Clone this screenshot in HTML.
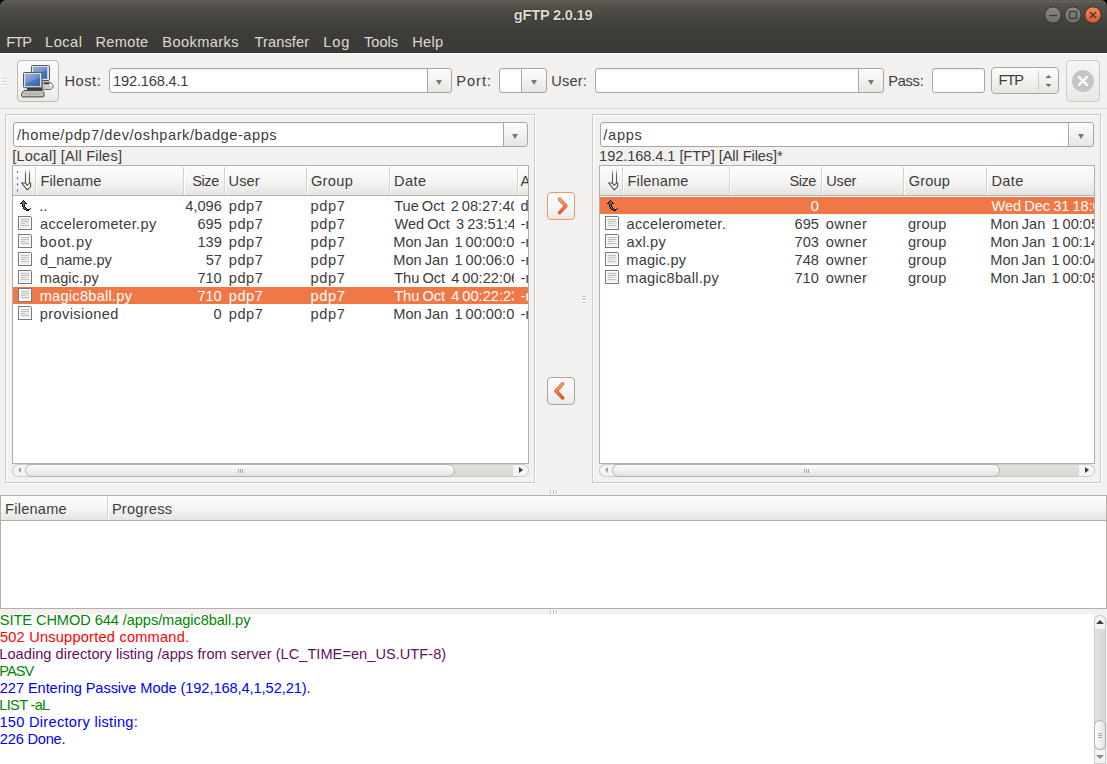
<!DOCTYPE html><html><head><meta charset="utf-8"><style>
*{margin:0;padding:0;box-sizing:border-box}
html,body{width:1107px;height:764px;overflow:hidden}
body{position:relative;background:#f2f1f0;font-family:"Liberation Sans",sans-serif;font-size:14.6px;color:#3c3c3c}
.a{position:absolute}
.t{position:absolute;white-space:pre;line-height:17px}
svg{position:absolute;overflow:visible}
.px{shape-rendering:crispEdges}
.entry{position:absolute;background:#fff;border:1px solid #aaa69f;border-radius:3px;box-shadow:inset 0 1px 1px rgba(0,0,0,.06)}
.cbtn{position:absolute;border:1px solid #aaa69f;border-radius:0 3px 3px 0;background:linear-gradient(#fcfcfc,#f3f2f1 50%,#e7e5e2)}
.arr{position:absolute;width:0;height:0;border-left:3.5px solid transparent;border-right:3.5px solid transparent;border-top:5px solid #787672;margin-left:1px;margin-top:1.5px}
.frame{position:absolute;border:1px solid #cfccc7;box-shadow:inset 1px 1px 0 #fff,1px 1px 0 #fff}
.list{position:absolute;background:#fff;border:1px solid #b3b0aa;overflow:hidden}
.hdr{position:absolute;left:0;top:0;background:linear-gradient(#fdfdfd,#f6f5f4 50%,#e6e4e1);border-bottom:1px solid #b3b0aa}
.sep{position:absolute;width:1px;background:#d6d3ce;box-shadow:1px 0 0 #fff}
.sel{position:absolute;background:#f07746}
</style></head><body>
<div class="a" style="left:0;top:0;width:1107px;height:53px;background:#000"></div>
<div class="a" style="left:0;top:0;width:1107px;height:53px;border-radius:6px 6px 0 0;background:linear-gradient(#5d5b53 0px,#57554e 3px,#46453f 18px,#3d3c38 30px,#3c3b37 52px)"></div>
<div class="a" style="left:5px;top:1px;width:1097px;height:1px;background:#6b6961;opacity:.8"></div>
<div class="a" style="left:0;top:52px;width:1107px;height:1px;background:#2f2e2a"></div>
<div class="a" style="left:0;top:53px;width:1107px;height:1px;background:#fff"></div>
<div class="t" style="left:513.80px;top:7.10px;color:#dfdbd2;letter-spacing:-0.210px;font-weight:bold;text-shadow:0 0 1.5px rgba(0,0,0,.8);">gFTP 2.0.19</div>
<svg style="left:0;top:0" width="1107" height="30"><defs><linearGradient id="gb" x1="0" y1="0" x2="0" y2="1"><stop offset="0" stop-color="#8a8880"/><stop offset="1" stop-color="#6f6d66"/></linearGradient><linearGradient id="go" x1="0" y1="0" x2="0" y2="1"><stop offset="0" stop-color="#f58a5c"/><stop offset="1" stop-color="#e0542a"/></linearGradient></defs><circle cx="1052.9" cy="15" r="8.2" fill="url(#gb)" stroke="#33322e" stroke-width="1"/><circle cx="1073" cy="15" r="8.2" fill="url(#gb)" stroke="#33322e" stroke-width="1"/><circle cx="1093" cy="15" r="8.2" fill="url(#go)" stroke="#33322e" stroke-width="1"/><line x1="1049" y1="15.5" x2="1057" y2="15.5" stroke="#3c3b37" stroke-width="1.3"/><rect x="1069.5" y="11.5" width="7" height="7" fill="none" stroke="#3c3b37" stroke-width="1.3"/><path d="M1090 12 L1096 18 M1096 12 L1090 18" stroke="#3c3b37" stroke-width="1.4"/></svg>
<div class="t" style="left:6.30px;top:33.50px;color:#dfdbd2;letter-spacing:-1.000px;">FTP</div>
<div class="t" style="left:45.10px;top:33.50px;color:#dfdbd2;letter-spacing:0.475px;">Local</div>
<div class="t" style="left:95.50px;top:33.50px;color:#dfdbd2;letter-spacing:0.320px;">Remote</div>
<div class="t" style="left:162.30px;top:33.50px;color:#dfdbd2;letter-spacing:0.413px;">Bookmarks</div>
<div class="t" style="left:254.60px;top:33.50px;color:#dfdbd2;letter-spacing:0.086px;">Transfer</div>
<div class="t" style="left:323.30px;top:33.50px;color:#dfdbd2;letter-spacing:0.900px;">Log</div>
<div class="t" style="left:364.00px;top:33.50px;color:#dfdbd2;letter-spacing:-0.000px;">Tools</div>
<div class="t" style="left:412.20px;top:33.50px;color:#dfdbd2;letter-spacing:0.267px;">Help</div>
<div class="a" style="left:0;top:108px;width:1107px;height:1px;background:#dedbd7"></div>
<div class="a" style="left:3px;top:78px;width:4px;height:1px;background:#cfccc7;box-shadow:0 1px 0 #fff"></div>
<div class="a" style="left:3px;top:81px;width:4px;height:1px;background:#cfccc7;box-shadow:0 1px 0 #fff"></div>
<div class="a" style="left:3px;top:84px;width:4px;height:1px;background:#cfccc7;box-shadow:0 1px 0 #fff"></div>
<div class="a" style="left:17px;top:60px;width:42px;height:42px;border:1px solid #bdb9b3;border-radius:4px;background:linear-gradient(#fbfbfb,#f4f3f2 60%,#ebe9e6)"></div>
<svg style="left:0;top:0" width="60" height="100">
<defs><linearGradient id="scr" x1="0" y1="0" x2="1" y2="1"><stop offset="0" stop-color="#86a3d6"/><stop offset=".5" stop-color="#4f78c0"/><stop offset="1" stop-color="#3563b2"/></linearGradient></defs>
<rect x="31.5" y="65.5" width="18" height="15" rx="1" fill="#e2e2dd" stroke="#5a5a5a" stroke-width="1"/>
<rect x="33" y="67" width="14.2" height="11.8" fill="url(#scr)"/>
<path d="M33 67 h14.2 v3 l-14.2 6z" fill="#fff" opacity=".18"/>
<path d="M42.5 82 h7.5 l3 3 v2.5 l-2 2 h-8.5z" fill="#cfcfca" stroke="#555" stroke-width="0.8"/>
<rect x="44" y="82.8" width="6.5" height="1.3" fill="#1e1e1e"/>
<path d="M49.5 82.5 l3 2.5 l-1 2 l-2.5 -1.5z" fill="#f4f4f2"/>
<rect x="23.5" y="72.5" width="18.4" height="15.2" rx="1" fill="#dededa" stroke="#555" stroke-width="1"/>
<rect x="25.2" y="74" width="14.8" height="12.1" fill="url(#scr)"/>
<path d="M25.2 74 h14.8 v3.5 l-14.8 6.5z" fill="#fff" opacity=".18"/>
<rect x="27" y="88" width="15" height="2.2" fill="#3a3a3a"/>
<path d="M24 90.6 h18.5 l1.4 2.2 v3.4 l-1 0.7 h-20.5 l-0.8 -1 v-2.2z" fill="#c9c9c4" stroke="#333" stroke-width="0.9"/>
<rect x="24.5" y="92.5" width="17" height="2.6" fill="#b7b7b2"/>
</svg>
<div class="t" style="left:64.40px;top:72.70px;letter-spacing:0.575px;">Host:</div>
<div class="entry" style="left:109px;top:68px;width:319px;height:25px;border-radius:3px 0 0 3px"></div>
<div class="cbtn" style="left:427px;top:68px;width:25px;height:25px"></div>
<div class="arr" style="left:435px;top:78px"></div>
<div class="t" style="left:113.10px;top:72.70px;letter-spacing:-0.170px;">192.168.4.1</div>
<div class="t" style="left:456.20px;top:72.70px;letter-spacing:1.000px;">Port:</div>
<div class="entry" style="left:499px;top:68px;width:23px;height:25px;border-radius:3px 0 0 3px"></div>
<div class="cbtn" style="left:521px;top:68px;width:26px;height:25px"></div>
<div class="arr" style="left:530px;top:78px"></div>
<div class="t" style="left:551.30px;top:72.70px;letter-spacing:0.150px;">User:</div>
<div class="entry" style="left:595px;top:68px;width:264px;height:25px;border-radius:3px 0 0 3px"></div>
<div class="cbtn" style="left:858px;top:68px;width:26px;height:25px"></div>
<div class="arr" style="left:867px;top:78px"></div>
<div class="t" style="left:888.20px;top:72.70px;letter-spacing:-0.250px;">Pass:</div>
<div class="entry" style="left:932px;top:68px;width:53px;height:25px"></div>
<div class="a" style="left:991px;top:67px;width:68px;height:27px;border:1px solid #aaa69f;border-radius:4px;background:linear-gradient(#fcfcfc,#f3f2f1 50%,#e7e5e2)"></div>
<div class="a" style="left:1038px;top:71px;width:1px;height:19px;background:#cfccc7"></div>
<svg style="left:1044px;top:74px" width="10" height="14"><path d="M1.5 4 L4.5 1 L7.5 4z" fill="#6c6a66"/><path d="M1.5 10 L4.5 13 L7.5 10z" fill="#6c6a66"/></svg>
<div class="t" style="left:998.50px;top:72.40px;letter-spacing:-1.000px;">FTP</div>
<div class="a" style="left:1066px;top:60px;width:34px;height:42px;border:1px solid #cfccc7;border-radius:4px;background:linear-gradient(#f6f5f4,#f0efee 60%,#e9e7e4)"></div>
<svg style="left:1071px;top:69px" width="24" height="24"><circle cx="12" cy="12" r="11" fill="#c7c4c1"/><path d="M8 8 L16 16 M16 8 L8 16" stroke="#fff" stroke-width="2.4" stroke-linecap="round"/></svg>
<div class="frame" style="left:5px;top:114px;width:530px;height:369px"></div>
<div class="entry" style="left:13px;top:122px;width:491px;height:25px;border-radius:3px 0 0 3px"></div>
<div class="cbtn" style="left:503px;top:122px;width:25px;height:25px"></div>
<div class="arr" style="left:511px;top:132px"></div>
<div class="t" style="left:17.00px;top:127.00px;letter-spacing:0.559px;">/home/pdp7/dev/oshpark/badge-apps</div>
<div class="t" style="left:12.25px;top:148.20px;letter-spacing:0.192px;">[Local] [All Files]</div>
<div class="list" style="left:12px;top:165px;width:517px;height:299px">
<div class="hdr" style="width:515px;height:30px"></div>
<div class="sep" style="left:22px;top:1px;height:28px"></div>
<div class="sep" style="left:170px;top:1px;height:28px"></div>
<div class="sep" style="left:211px;top:1px;height:28px"></div>
<div class="sep" style="left:293px;top:1px;height:28px"></div>
<div class="sep" style="left:376px;top:1px;height:28px"></div>
<div class="sep" style="left:504px;top:1px;height:28px"></div>
</div>
<svg style="left:0;top:0" width="1107" height="200"><defs><linearGradient id="sg" x1="0" y1="0" x2="0" y2="1"><stop offset="0" stop-color="#999" stop-opacity=".3"/><stop offset=".35" stop-color="#666"/><stop offset="1" stop-color="#555"/></linearGradient></defs><path d="M17.5 171 V192" stroke="#3f6fc4" stroke-width="1.1" stroke-dasharray="2 4.2"/><path d="M25.5 169.5 V183 M29.5 169.5 V183" stroke="url(#sg)" stroke-width="1.1"/><path d="M21.6 183 L27.3 189.8 L30.6 186.6 L30.6 183 L29.5 183 L27.3 185.5 L25.5 183 Z" fill="#fbfbfb" stroke="#4a4a4a" stroke-width="1.1" stroke-linejoin="round"/></svg>
<div class="a" style="left:12px;top:464px;width:517px;height:13px;border:1px solid #cfccc7;border-radius:7px;background:linear-gradient(#e3e1de,#d9d7d3)"></div>
<div class="a" style="left:12px;top:464px;width:16px;height:13px;border:1px solid #cfccc7;border-radius:7px 0 0 7px;border-right:none;background:#f5f4f3"></div>
<div class="a" style="left:513px;top:464px;width:16px;height:13px;border:1px solid #cfccc7;border-radius:0 7px 7px 0;border-left:none;background:#f5f4f3"></div>
<div class="a" style="left:17.5px;top:467.3px;width:0;height:0;border-top:3.5px solid transparent;border-bottom:3.5px solid transparent;border-right:3.5px solid #a3a09b"></div>
<div class="a" style="left:519px;top:467px;width:0;height:0;border-top:3.5px solid transparent;border-bottom:3.5px solid transparent;border-left:4px solid #3c3c3c"></div>
<div class="a" style="left:25px;top:464px;width:430px;height:13px;border:1px solid #b5b2ac;border-radius:7px;background:linear-gradient(#fbfbfa,#f1f0ef 55%,#e3e1de)"></div>
<div class="a" style="left:238px;top:469px;width:1px;height:4px;background:#aaa7a2"></div>
<div class="a" style="left:240px;top:469px;width:1px;height:4px;background:#aaa7a2"></div>
<div class="a" style="left:242px;top:469px;width:1px;height:4px;background:#aaa7a2"></div>
<div class="frame" style="left:592px;top:114px;width:509px;height:369px"></div>
<div class="entry" style="left:600px;top:122px;width:470px;height:25px;border-radius:3px 0 0 3px"></div>
<div class="cbtn" style="left:1068px;top:122px;width:26px;height:25px"></div>
<div class="arr" style="left:1077px;top:132px"></div>
<div class="t" style="left:603.30px;top:127.00px;letter-spacing:0.725px;">/apps</div>
<div class="t" style="left:599.10px;top:148.20px;letter-spacing:-0.072px;">192.168.4.1 [FTP] [All Files]*</div>
<div class="list" style="left:599px;top:165px;width:496px;height:299px">
<div class="hdr" style="width:494px;height:30px"></div>
<div class="sep" style="left:22px;top:1px;height:28px"></div>
<div class="sep" style="left:129px;top:1px;height:28px"></div>
<div class="sep" style="left:221px;top:1px;height:28px"></div>
<div class="sep" style="left:303px;top:1px;height:28px"></div>
<div class="sep" style="left:386px;top:1px;height:28px"></div>
</div>
<svg style="left:0;top:0" width="1107" height="200"><defs><linearGradient id="sg" x1="0" y1="0" x2="0" y2="1"><stop offset="0" stop-color="#999" stop-opacity=".3"/><stop offset=".35" stop-color="#666"/><stop offset="1" stop-color="#555"/></linearGradient></defs><path d="M612.5 169.5 V183 M616.5 169.5 V183" stroke="url(#sg)" stroke-width="1.1"/><path d="M608.6 183 L614.3 189.8 L617.6 186.6 L617.6 183 L616.5 183 L614.3 185.5 L612.5 183 Z" fill="#fbfbfb" stroke="#4a4a4a" stroke-width="1.1" stroke-linejoin="round"/></svg>
<div class="a" style="left:599px;top:464px;width:496px;height:13px;border:1px solid #cfccc7;border-radius:7px;background:linear-gradient(#e3e1de,#d9d7d3)"></div>
<div class="a" style="left:599px;top:464px;width:16px;height:13px;border:1px solid #cfccc7;border-radius:7px 0 0 7px;border-right:none;background:#f5f4f3"></div>
<div class="a" style="left:1079px;top:464px;width:16px;height:13px;border:1px solid #cfccc7;border-radius:0 7px 7px 0;border-left:none;background:#f5f4f3"></div>
<div class="a" style="left:604.5px;top:467.3px;width:0;height:0;border-top:3.5px solid transparent;border-bottom:3.5px solid transparent;border-right:3.5px solid #a3a09b"></div>
<div class="a" style="left:1085px;top:467px;width:0;height:0;border-top:3.5px solid transparent;border-bottom:3.5px solid transparent;border-left:4px solid #3c3c3c"></div>
<div class="a" style="left:612px;top:464px;width:388px;height:13px;border:1px solid #b5b2ac;border-radius:7px;background:linear-gradient(#fbfbfa,#f1f0ef 55%,#e3e1de)"></div>
<div class="a" style="left:804px;top:469px;width:1px;height:4px;background:#aaa7a2"></div>
<div class="a" style="left:806px;top:469px;width:1px;height:4px;background:#aaa7a2"></div>
<div class="a" style="left:808px;top:469px;width:1px;height:4px;background:#aaa7a2"></div>
<div class="t" style="left:40.40px;top:173.30px;letter-spacing:0.129px;">Filename</div>
<div class="t" style="left:192.20px;top:173.30px;letter-spacing:-0.400px;">Size</div>
<div class="t" style="left:228.50px;top:173.30px;letter-spacing:0.100px;">User</div>
<div class="t" style="left:310.90px;top:173.30px;letter-spacing:0.375px;">Group</div>
<div class="t" style="left:394.00px;top:173.30px;letter-spacing:0.467px;">Date</div>
<div class="t" style="left:520.40px;top:173.30px;width:7.60px;overflow:hidden;">A</div>
<div class="t" style="left:627.60px;top:173.30px;letter-spacing:0.114px;">Filename</div>
<div class="t" style="left:789.40px;top:173.30px;letter-spacing:-0.467px;">Size</div>
<div class="t" style="left:826.30px;top:173.30px;letter-spacing:-0.233px;">User</div>
<div class="t" style="left:908.80px;top:173.30px;letter-spacing:0.150px;">Group</div>
<div class="t" style="left:991.40px;top:173.30px;letter-spacing:0.367px;">Date</div>
<svg class="px" style="left:18px;top:198px" width="14" height="14"><rect x="5" y="2" width="1" height="1" fill="#0a0a0a"/><rect x="4" y="3" width="1" height="1" fill="#0a0a0a"/><rect x="5" y="3" width="1" height="1" fill="#5b7a4a"/><rect x="6" y="3" width="1" height="1" fill="#0a0a0a"/><rect x="3" y="4" width="1" height="1" fill="#0a0a0a"/><rect x="4" y="4" width="1" height="1" fill="#5b7a4a"/><rect x="5" y="4" width="1" height="1" fill="#5b7a4a"/><rect x="6" y="4" width="1" height="1" fill="#5b7a4a"/><rect x="7" y="4" width="1" height="1" fill="#0a0a0a"/><rect x="2" y="5" width="1" height="1" fill="#0a0a0a"/><rect x="3" y="5" width="1" height="1" fill="#0a0a0a"/><rect x="4" y="5" width="1" height="1" fill="#5b7a4a"/><rect x="5" y="5" width="1" height="1" fill="#5b7a4a"/><rect x="6" y="5" width="1" height="1" fill="#5b7a4a"/><rect x="7" y="5" width="1" height="1" fill="#0a0a0a"/><rect x="8" y="5" width="1" height="1" fill="#0a0a0a"/><rect x="4" y="6" width="1" height="1" fill="#0a0a0a"/><rect x="5" y="6" width="1" height="1" fill="#5b7a4a"/><rect x="6" y="6" width="1" height="1" fill="#0a0a0a"/><rect x="4" y="7" width="1" height="1" fill="#0a0a0a"/><rect x="5" y="7" width="1" height="1" fill="#5b7a4a"/><rect x="6" y="7" width="1" height="1" fill="#0a0a0a"/><rect x="4" y="8" width="1" height="1" fill="#0a0a0a"/><rect x="5" y="8" width="1" height="1" fill="#5b7a4a"/><rect x="6" y="8" width="1" height="1" fill="#0a0a0a"/><rect x="5" y="9" width="1" height="1" fill="#0a0a0a"/><rect x="6" y="9" width="1" height="1" fill="#5b7a4a"/><rect x="7" y="9" width="1" height="1" fill="#0a0a0a"/><rect x="5" y="10" width="1" height="1" fill="#0a0a0a"/><rect x="6" y="10" width="1" height="1" fill="#5b7a4a"/><rect x="7" y="10" width="1" height="1" fill="#5b7a4a"/><rect x="8" y="10" width="1" height="1" fill="#0a0a0a"/><rect x="12" y="10" width="1" height="1" fill="#0a0a0a"/><rect x="6" y="11" width="1" height="1" fill="#0a0a0a"/><rect x="7" y="11" width="1" height="1" fill="#0a0a0a"/><rect x="8" y="11" width="1" height="1" fill="#5b7a4a"/><rect x="9" y="11" width="1" height="1" fill="#0a0a0a"/><rect x="10" y="11" width="1" height="1" fill="#0a0a0a"/><rect x="11" y="11" width="1" height="1" fill="#0a0a0a"/><rect x="8" y="12" width="1" height="1" fill="#0a0a0a"/><rect x="9" y="12" width="1" height="1" fill="#0a0a0a"/><rect x="10" y="12" width="1" height="1" fill="#0a0a0a"/></svg>
<div class="t" style="left:39.30px;top:197.50px;">..</div>
<div class="t" style="left:185.30px;top:197.50px;">4,096</div>
<div class="t" style="left:228.70px;top:197.50px;letter-spacing:0.600px;">pdp7</div>
<div class="t" style="left:310.60px;top:197.50px;letter-spacing:0.600px;">pdp7</div>
<div class="t" style="left:394.20px;top:197.50px;width:119.80px;overflow:hidden;word-spacing:-1px;">Tue Oct  2 08:27:40</div>
<div class="t" style="left:520.60px;top:197.50px;width:7.40px;overflow:hidden;">drwxr</div>
<svg class="px" style="left:18px;top:216px" width="14" height="14"><rect x="0" y="0" width="13" height="1" fill="#787878"/><rect x="0" y="0" width="1" height="14" fill="#787878"/><rect x="13" y="1" width="1" height="13" fill="#787878"/><rect x="0" y="13" width="14" height="1" fill="#787878"/><rect x="1" y="1" width="12" height="12" fill="#fff"/><rect x="2" y="2" width="10" height="10" fill="#eeeeee"/><rect x="3" y="3" width="8" height="1" fill="#c2c2c2"/><rect x="3" y="5" width="8" height="1" fill="#c2c2c2"/><rect x="3" y="7" width="4" height="1" fill="#c2c2c2"/><rect x="7" y="7" width="4" height="1" fill="#e2e2e2"/><rect x="3" y="9" width="8" height="1" fill="#c2c2c2"/></svg>
<div class="t" style="left:40.00px;top:215.50px;letter-spacing:0.340px;">accelerometer.py</div>
<div class="t" style="left:197.50px;top:215.50px;">695</div>
<div class="t" style="left:228.70px;top:215.50px;letter-spacing:0.600px;">pdp7</div>
<div class="t" style="left:310.60px;top:215.50px;letter-spacing:0.600px;">pdp7</div>
<div class="t" style="left:394.40px;top:215.50px;width:119.60px;overflow:hidden;word-spacing:-1px;">Wed Oct  3 23:51:41</div>
<div class="t" style="left:520.60px;top:215.50px;width:7.40px;overflow:hidden;">-rw-r</div>
<svg class="px" style="left:18px;top:234px" width="14" height="14"><rect x="0" y="0" width="13" height="1" fill="#787878"/><rect x="0" y="0" width="1" height="14" fill="#787878"/><rect x="13" y="1" width="1" height="13" fill="#787878"/><rect x="0" y="13" width="14" height="1" fill="#787878"/><rect x="1" y="1" width="12" height="12" fill="#fff"/><rect x="2" y="2" width="10" height="10" fill="#eeeeee"/><rect x="3" y="3" width="8" height="1" fill="#c2c2c2"/><rect x="3" y="5" width="8" height="1" fill="#c2c2c2"/><rect x="3" y="7" width="4" height="1" fill="#c2c2c2"/><rect x="7" y="7" width="4" height="1" fill="#e2e2e2"/><rect x="3" y="9" width="8" height="1" fill="#c2c2c2"/></svg>
<div class="t" style="left:39.70px;top:233.50px;letter-spacing:0.750px;">boot.py</div>
<div class="t" style="left:197.50px;top:233.50px;">139</div>
<div class="t" style="left:228.70px;top:233.50px;letter-spacing:0.600px;">pdp7</div>
<div class="t" style="left:310.60px;top:233.50px;letter-spacing:0.600px;">pdp7</div>
<div class="t" style="left:393.30px;top:233.50px;width:120.70px;overflow:hidden;word-spacing:-1px;">Mon Jan  1 00:00:00</div>
<div class="t" style="left:520.60px;top:233.50px;width:7.40px;overflow:hidden;">-rw-r</div>
<svg class="px" style="left:18px;top:252px" width="14" height="14"><rect x="0" y="0" width="13" height="1" fill="#787878"/><rect x="0" y="0" width="1" height="14" fill="#787878"/><rect x="13" y="1" width="1" height="13" fill="#787878"/><rect x="0" y="13" width="14" height="1" fill="#787878"/><rect x="1" y="1" width="12" height="12" fill="#fff"/><rect x="2" y="2" width="10" height="10" fill="#eeeeee"/><rect x="3" y="3" width="8" height="1" fill="#c2c2c2"/><rect x="3" y="5" width="8" height="1" fill="#c2c2c2"/><rect x="3" y="7" width="4" height="1" fill="#c2c2c2"/><rect x="7" y="7" width="4" height="1" fill="#e2e2e2"/><rect x="3" y="9" width="8" height="1" fill="#c2c2c2"/></svg>
<div class="t" style="left:40.00px;top:251.50px;letter-spacing:-0.050px;">d_name.py</div>
<div class="t" style="left:205.70px;top:251.50px;">57</div>
<div class="t" style="left:228.70px;top:251.50px;letter-spacing:0.600px;">pdp7</div>
<div class="t" style="left:310.60px;top:251.50px;letter-spacing:0.600px;">pdp7</div>
<div class="t" style="left:393.30px;top:251.50px;width:120.70px;overflow:hidden;word-spacing:-1px;">Mon Jan  1 00:06:00</div>
<div class="t" style="left:520.60px;top:251.50px;width:7.40px;overflow:hidden;">-rw-r</div>
<svg class="px" style="left:18px;top:270px" width="14" height="14"><rect x="0" y="0" width="13" height="1" fill="#787878"/><rect x="0" y="0" width="1" height="14" fill="#787878"/><rect x="13" y="1" width="1" height="13" fill="#787878"/><rect x="0" y="13" width="14" height="1" fill="#787878"/><rect x="1" y="1" width="12" height="12" fill="#fff"/><rect x="2" y="2" width="10" height="10" fill="#eeeeee"/><rect x="3" y="3" width="8" height="1" fill="#c2c2c2"/><rect x="3" y="5" width="8" height="1" fill="#c2c2c2"/><rect x="3" y="7" width="4" height="1" fill="#c2c2c2"/><rect x="7" y="7" width="4" height="1" fill="#e2e2e2"/><rect x="3" y="9" width="8" height="1" fill="#c2c2c2"/></svg>
<div class="t" style="left:39.70px;top:269.50px;letter-spacing:0.086px;">magic.py</div>
<div class="t" style="left:197.40px;top:269.50px;">710</div>
<div class="t" style="left:228.70px;top:269.50px;letter-spacing:0.600px;">pdp7</div>
<div class="t" style="left:310.60px;top:269.50px;letter-spacing:0.600px;">pdp7</div>
<div class="t" style="left:394.20px;top:269.50px;width:119.80px;overflow:hidden;word-spacing:-1px;">Thu Oct  4 00:22:06</div>
<div class="t" style="left:520.60px;top:269.50px;width:7.40px;overflow:hidden;">-rw-r</div>
<div class="sel" style="left:13px;top:287px;width:515px;height:17px"></div>
<svg class="px" style="left:18px;top:288px" width="14" height="14"><rect x="0" y="0" width="13" height="1" fill="#787878"/><rect x="0" y="0" width="1" height="14" fill="#787878"/><rect x="13" y="1" width="1" height="13" fill="#787878"/><rect x="0" y="13" width="14" height="1" fill="#787878"/><rect x="1" y="1" width="12" height="12" fill="#fff"/><rect x="2" y="2" width="10" height="10" fill="#eeeeee"/><rect x="3" y="3" width="8" height="1" fill="#c2c2c2"/><rect x="3" y="5" width="8" height="1" fill="#c2c2c2"/><rect x="3" y="7" width="4" height="1" fill="#c2c2c2"/><rect x="7" y="7" width="4" height="1" fill="#e2e2e2"/><rect x="3" y="9" width="8" height="1" fill="#c2c2c2"/></svg>
<div class="t" style="left:39.70px;top:287.50px;color:#fff;letter-spacing:0.258px;">magic8ball.py</div>
<div class="t" style="left:197.40px;top:287.50px;color:#fff;">710</div>
<div class="t" style="left:228.70px;top:287.50px;color:#fff;letter-spacing:0.600px;">pdp7</div>
<div class="t" style="left:310.60px;top:287.50px;color:#fff;letter-spacing:0.600px;">pdp7</div>
<div class="t" style="left:394.20px;top:287.50px;color:#fff;width:119.80px;overflow:hidden;word-spacing:-1px;">Thu Oct  4 00:22:23</div>
<div class="t" style="left:520.60px;top:287.50px;color:#fff;width:7.40px;overflow:hidden;">-rw-r</div>
<svg class="px" style="left:18px;top:306px" width="14" height="14"><rect x="0" y="0" width="13" height="1" fill="#787878"/><rect x="0" y="0" width="1" height="14" fill="#787878"/><rect x="13" y="1" width="1" height="13" fill="#787878"/><rect x="0" y="13" width="14" height="1" fill="#787878"/><rect x="1" y="1" width="12" height="12" fill="#fff"/><rect x="2" y="2" width="10" height="10" fill="#eeeeee"/><rect x="3" y="3" width="8" height="1" fill="#c2c2c2"/><rect x="3" y="5" width="8" height="1" fill="#c2c2c2"/><rect x="3" y="7" width="4" height="1" fill="#c2c2c2"/><rect x="7" y="7" width="4" height="1" fill="#e2e2e2"/><rect x="3" y="9" width="8" height="1" fill="#c2c2c2"/></svg>
<div class="t" style="left:39.70px;top:305.50px;letter-spacing:0.410px;">provisioned</div>
<div class="t" style="left:213.60px;top:305.50px;">0</div>
<div class="t" style="left:228.70px;top:305.50px;letter-spacing:0.600px;">pdp7</div>
<div class="t" style="left:310.60px;top:305.50px;letter-spacing:0.600px;">pdp7</div>
<div class="t" style="left:393.30px;top:305.50px;width:120.70px;overflow:hidden;word-spacing:-1px;">Mon Jan  1 00:00:00</div>
<div class="t" style="left:520.60px;top:305.50px;width:7.40px;overflow:hidden;">-rw-r</div>
<div class="sel" style="left:600px;top:197px;width:494px;height:17px"></div>
<svg class="px" style="left:605px;top:198px" width="14" height="14"><rect x="5" y="2" width="1" height="1" fill="#0a0a0a"/><rect x="4" y="3" width="1" height="1" fill="#0a0a0a"/><rect x="5" y="3" width="1" height="1" fill="#5b7a4a"/><rect x="6" y="3" width="1" height="1" fill="#0a0a0a"/><rect x="3" y="4" width="1" height="1" fill="#0a0a0a"/><rect x="4" y="4" width="1" height="1" fill="#5b7a4a"/><rect x="5" y="4" width="1" height="1" fill="#5b7a4a"/><rect x="6" y="4" width="1" height="1" fill="#5b7a4a"/><rect x="7" y="4" width="1" height="1" fill="#0a0a0a"/><rect x="2" y="5" width="1" height="1" fill="#0a0a0a"/><rect x="3" y="5" width="1" height="1" fill="#0a0a0a"/><rect x="4" y="5" width="1" height="1" fill="#5b7a4a"/><rect x="5" y="5" width="1" height="1" fill="#5b7a4a"/><rect x="6" y="5" width="1" height="1" fill="#5b7a4a"/><rect x="7" y="5" width="1" height="1" fill="#0a0a0a"/><rect x="8" y="5" width="1" height="1" fill="#0a0a0a"/><rect x="4" y="6" width="1" height="1" fill="#0a0a0a"/><rect x="5" y="6" width="1" height="1" fill="#5b7a4a"/><rect x="6" y="6" width="1" height="1" fill="#0a0a0a"/><rect x="4" y="7" width="1" height="1" fill="#0a0a0a"/><rect x="5" y="7" width="1" height="1" fill="#5b7a4a"/><rect x="6" y="7" width="1" height="1" fill="#0a0a0a"/><rect x="4" y="8" width="1" height="1" fill="#0a0a0a"/><rect x="5" y="8" width="1" height="1" fill="#5b7a4a"/><rect x="6" y="8" width="1" height="1" fill="#0a0a0a"/><rect x="5" y="9" width="1" height="1" fill="#0a0a0a"/><rect x="6" y="9" width="1" height="1" fill="#5b7a4a"/><rect x="7" y="9" width="1" height="1" fill="#0a0a0a"/><rect x="5" y="10" width="1" height="1" fill="#0a0a0a"/><rect x="6" y="10" width="1" height="1" fill="#5b7a4a"/><rect x="7" y="10" width="1" height="1" fill="#5b7a4a"/><rect x="8" y="10" width="1" height="1" fill="#0a0a0a"/><rect x="12" y="10" width="1" height="1" fill="#0a0a0a"/><rect x="6" y="11" width="1" height="1" fill="#0a0a0a"/><rect x="7" y="11" width="1" height="1" fill="#0a0a0a"/><rect x="8" y="11" width="1" height="1" fill="#5b7a4a"/><rect x="9" y="11" width="1" height="1" fill="#0a0a0a"/><rect x="10" y="11" width="1" height="1" fill="#0a0a0a"/><rect x="11" y="11" width="1" height="1" fill="#0a0a0a"/><rect x="8" y="12" width="1" height="1" fill="#0a0a0a"/><rect x="9" y="12" width="1" height="1" fill="#0a0a0a"/><rect x="10" y="12" width="1" height="1" fill="#0a0a0a"/></svg>
<div class="t" style="left:810.70px;top:197.50px;color:#fff;">0</div>
<div class="t" style="left:991.40px;top:197.50px;color:#fff;width:102.60px;overflow:hidden;word-spacing:-1px;">Wed Dec 31 18:00:00</div>
<svg class="px" style="left:605px;top:216px" width="14" height="14"><rect x="0" y="0" width="13" height="1" fill="#787878"/><rect x="0" y="0" width="1" height="14" fill="#787878"/><rect x="13" y="1" width="1" height="13" fill="#787878"/><rect x="0" y="13" width="14" height="1" fill="#787878"/><rect x="1" y="1" width="12" height="12" fill="#fff"/><rect x="2" y="2" width="10" height="10" fill="#eeeeee"/><rect x="3" y="3" width="8" height="1" fill="#c2c2c2"/><rect x="3" y="5" width="8" height="1" fill="#c2c2c2"/><rect x="3" y="7" width="4" height="1" fill="#c2c2c2"/><rect x="7" y="7" width="4" height="1" fill="#e2e2e2"/><rect x="3" y="9" width="8" height="1" fill="#c2c2c2"/></svg>
<div class="t" style="left:626.60px;top:215.50px;width:100.70px;overflow:hidden;letter-spacing:0.26px;">accelerometer.py</div>
<div class="t" style="left:794.60px;top:215.50px;">695</div>
<div class="t" style="left:825.70px;top:215.50px;letter-spacing:0.325px;">owner</div>
<div class="t" style="left:907.90px;top:215.50px;letter-spacing:0.275px;">group</div>
<div class="t" style="left:990.30px;top:215.50px;width:103.70px;overflow:hidden;word-spacing:-1px;">Mon Jan  1 00:05:00</div>
<svg class="px" style="left:605px;top:234px" width="14" height="14"><rect x="0" y="0" width="13" height="1" fill="#787878"/><rect x="0" y="0" width="1" height="14" fill="#787878"/><rect x="13" y="1" width="1" height="13" fill="#787878"/><rect x="0" y="13" width="14" height="1" fill="#787878"/><rect x="1" y="1" width="12" height="12" fill="#fff"/><rect x="2" y="2" width="10" height="10" fill="#eeeeee"/><rect x="3" y="3" width="8" height="1" fill="#c2c2c2"/><rect x="3" y="5" width="8" height="1" fill="#c2c2c2"/><rect x="3" y="7" width="4" height="1" fill="#c2c2c2"/><rect x="7" y="7" width="4" height="1" fill="#e2e2e2"/><rect x="3" y="9" width="8" height="1" fill="#c2c2c2"/></svg>
<div class="t" style="left:626.60px;top:233.50px;letter-spacing:0.200px;">axl.py</div>
<div class="t" style="left:794.60px;top:233.50px;">703</div>
<div class="t" style="left:825.70px;top:233.50px;letter-spacing:0.325px;">owner</div>
<div class="t" style="left:907.90px;top:233.50px;letter-spacing:0.275px;">group</div>
<div class="t" style="left:990.30px;top:233.50px;width:103.70px;overflow:hidden;word-spacing:-1px;">Mon Jan  1 00:14:00</div>
<svg class="px" style="left:605px;top:252px" width="14" height="14"><rect x="0" y="0" width="13" height="1" fill="#787878"/><rect x="0" y="0" width="1" height="14" fill="#787878"/><rect x="13" y="1" width="1" height="13" fill="#787878"/><rect x="0" y="13" width="14" height="1" fill="#787878"/><rect x="1" y="1" width="12" height="12" fill="#fff"/><rect x="2" y="2" width="10" height="10" fill="#eeeeee"/><rect x="3" y="3" width="8" height="1" fill="#c2c2c2"/><rect x="3" y="5" width="8" height="1" fill="#c2c2c2"/><rect x="3" y="7" width="4" height="1" fill="#c2c2c2"/><rect x="7" y="7" width="4" height="1" fill="#e2e2e2"/><rect x="3" y="9" width="8" height="1" fill="#c2c2c2"/></svg>
<div class="t" style="left:626.30px;top:251.50px;letter-spacing:0.186px;">magic.py</div>
<div class="t" style="left:794.60px;top:251.50px;">748</div>
<div class="t" style="left:825.70px;top:251.50px;letter-spacing:0.325px;">owner</div>
<div class="t" style="left:907.90px;top:251.50px;letter-spacing:0.275px;">group</div>
<div class="t" style="left:990.30px;top:251.50px;width:103.70px;overflow:hidden;word-spacing:-1px;">Mon Jan  1 00:04:00</div>
<svg class="px" style="left:605px;top:270px" width="14" height="14"><rect x="0" y="0" width="13" height="1" fill="#787878"/><rect x="0" y="0" width="1" height="14" fill="#787878"/><rect x="13" y="1" width="1" height="13" fill="#787878"/><rect x="0" y="13" width="14" height="1" fill="#787878"/><rect x="1" y="1" width="12" height="12" fill="#fff"/><rect x="2" y="2" width="10" height="10" fill="#eeeeee"/><rect x="3" y="3" width="8" height="1" fill="#c2c2c2"/><rect x="3" y="5" width="8" height="1" fill="#c2c2c2"/><rect x="3" y="7" width="4" height="1" fill="#c2c2c2"/><rect x="7" y="7" width="4" height="1" fill="#e2e2e2"/><rect x="3" y="9" width="8" height="1" fill="#c2c2c2"/></svg>
<div class="t" style="left:626.30px;top:269.50px;letter-spacing:0.267px;">magic8ball.py</div>
<div class="t" style="left:794.50px;top:269.50px;">710</div>
<div class="t" style="left:825.70px;top:269.50px;letter-spacing:0.325px;">owner</div>
<div class="t" style="left:907.90px;top:269.50px;letter-spacing:0.275px;">group</div>
<div class="t" style="left:990.30px;top:269.50px;width:103.70px;overflow:hidden;word-spacing:-1px;">Mon Jan  1 00:05:00</div>
<div class="a" style="left:547px;top:192px;width:28px;height:28px;border:1px solid #f2956c;border-radius:4px;background:linear-gradient(#fdfdfd,#f5f4f3 60%,#ebe9e6)"></div><svg style="left:0;top:0" width="600" height="420"><defs><linearGradient id="ag192" x1="0" y1="0" x2="0" y2="1"><stop offset="0" stop-color="#eeb07a"/><stop offset="1" stop-color="#e9581f"/></linearGradient></defs><path d="M559.6 199.2 L565.8 205.9 L559.6 212.6" fill="none" stroke="#e2622a" stroke-width="3.6" stroke-linecap="round" stroke-linejoin="round"/><path d="M559.6 199.2 L565.8 205.9 L559.6 212.6" fill="none" stroke="url(#ag192)" stroke-width="2" stroke-linecap="round" stroke-linejoin="round"/></svg>
<div class="a" style="left:547px;top:377px;width:28px;height:28px;border:1px solid #aaa69f;border-radius:4px;background:linear-gradient(#fdfdfd,#f5f4f3 60%,#ebe9e6)"></div><svg style="left:0;top:0" width="600" height="420"><defs><linearGradient id="ag377" x1="0" y1="0" x2="0" y2="1"><stop offset="0" stop-color="#eeb07a"/><stop offset="1" stop-color="#e9581f"/></linearGradient></defs><path d="M562.7 383.8 L556 390.9 L562.7 398" fill="none" stroke="#e2622a" stroke-width="3.6" stroke-linecap="round" stroke-linejoin="round"/><path d="M562.7 383.8 L556 390.9 L562.7 398" fill="none" stroke="url(#ag377)" stroke-width="2" stroke-linecap="round" stroke-linejoin="round"/></svg>
<div class="a" style="left:582px;top:296px;width:4px;height:1px;background:#c8c5c0;box-shadow:0 1px 0 #fff"></div>
<div class="a" style="left:582px;top:299px;width:4px;height:1px;background:#c8c5c0;box-shadow:0 1px 0 #fff"></div>
<div class="a" style="left:582px;top:302px;width:4px;height:1px;background:#c8c5c0;box-shadow:0 1px 0 #fff"></div>
<div class="a" style="left:550px;top:490px;width:1px;height:4px;background:#c8c5c0;box-shadow:1px 0 0 #fff"></div>
<div class="a" style="left:553px;top:490px;width:1px;height:4px;background:#c8c5c0;box-shadow:1px 0 0 #fff"></div>
<div class="a" style="left:556px;top:490px;width:1px;height:4px;background:#c8c5c0;box-shadow:1px 0 0 #fff"></div>
<div class="list" style="left:0;top:495px;width:1107px;height:114px"><div class="hdr" style="width:1105px;height:25px"></div><div class="sep" style="left:106px;top:1px;height:23px"></div></div>
<div class="t" style="left:5.10px;top:501.30px;letter-spacing:0.214px;">Filename</div>
<div class="t" style="left:111.90px;top:501.30px;letter-spacing:0.243px;">Progress</div>
<div class="a" style="left:0;top:614px;width:1094px;height:150px;background:#fff"></div>
<div class="a" style="left:550px;top:610px;width:1px;height:4px;background:#c8c5c0;box-shadow:1px 0 0 #fff"></div>
<div class="a" style="left:553px;top:610px;width:1px;height:4px;background:#c8c5c0;box-shadow:1px 0 0 #fff"></div>
<div class="a" style="left:556px;top:610px;width:1px;height:4px;background:#c8c5c0;box-shadow:1px 0 0 #fff"></div>
<div class="t" style="left:-0.20px;top:612.10px;color:#008600;letter-spacing:-0.073px;">SITE CHMOD 644 /apps/magic8ball.py</div>
<div class="t" style="left:-0.10px;top:629.10px;color:#ff0000;letter-spacing:0.217px;">502 Unsupported command.</div>
<div class="t" style="left:-0.70px;top:646.10px;color:#650f60;letter-spacing:0.031px;">Loading directory listing /apps from server (LC_TIME=en_US.UTF-8)</div>
<div class="t" style="left:-0.70px;top:663.10px;color:#008600;letter-spacing:-0.967px;">PASV</div>
<div class="t" style="left:-0.20px;top:680.10px;color:#0000ff;letter-spacing:-0.071px;">227 Entering Passive Mode (192,168,4,1,52,21).</div>
<div class="t" style="left:-0.70px;top:697.10px;color:#008600;letter-spacing:-0.686px;">LIST -aL</div>
<div class="t" style="left:-0.60px;top:714.10px;color:#0000ff;letter-spacing:0.295px;">150 Directory listing:</div>
<div class="t" style="left:-0.20px;top:731.10px;color:#0000ff;letter-spacing:-0.200px;">226 Done.</div>
<div class="a" style="left:1094px;top:613px;width:13px;height:151px;background:#f2f1f0"></div>
<div class="a" style="left:1094px;top:615px;width:12px;height:152px;border:1px solid #cfccc7;border-radius:7px;background:linear-gradient(90deg,#e3e1de,#d9d7d3)"></div>
<div class="a" style="left:1094px;top:615px;width:12px;height:14px;border:1px solid #cfccc7;border-bottom:none;border-radius:7px 7px 0 0;background:#f5f4f3"></div>
<div class="a" style="left:1096px;top:620px;width:0;height:0;border-left:4px solid transparent;border-right:4px solid transparent;border-bottom:4px solid #3c3c3c"></div>
<div class="a" style="left:1094px;top:720px;width:12px;height:30px;border:1px solid #b5b2ac;border-radius:7px;background:linear-gradient(90deg,#fbfbfa,#f1f0ef 55%,#e3e1de)"></div>
<div class="a" style="left:1098px;top:733px;width:4px;height:1px;background:#aaa7a2"></div>
<div class="a" style="left:1098px;top:735px;width:4px;height:1px;background:#aaa7a2"></div>
<div class="a" style="left:1098px;top:737px;width:4px;height:1px;background:#aaa7a2"></div>
<div class="a" style="left:1094px;top:750px;width:12px;height:14px;border:1px solid #cfccc7;border-top:none;background:#f5f4f3"></div>
<div class="a" style="left:1096px;top:755px;width:0;height:0;border-left:4px solid transparent;border-right:4px solid transparent;border-top:4px solid #8e8b86"></div>
</body></html>
